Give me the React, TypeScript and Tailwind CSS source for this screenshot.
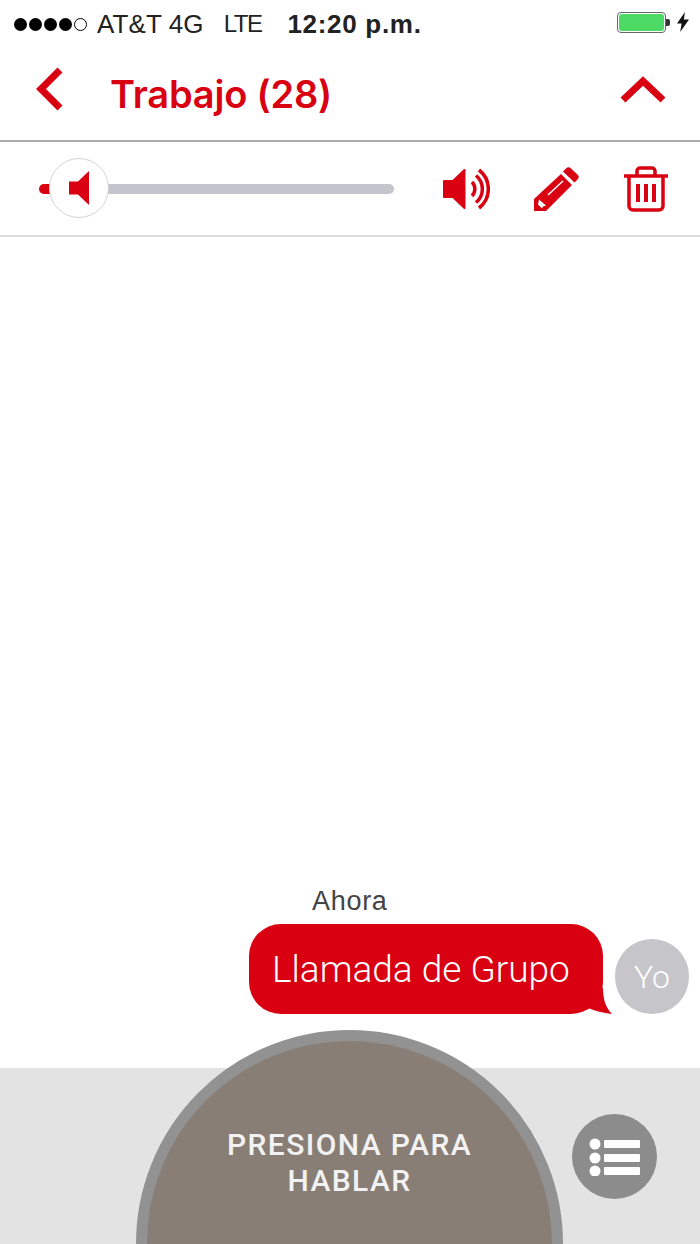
const RED = '#d90012';

function SignalDots() {
  return (
    <div className="flex items-center gap-[2px]">
      <span className="w-[13px] h-[13px] rounded-full bg-black" />
      <span className="w-[13px] h-[13px] rounded-full bg-black" />
      <span className="w-[13px] h-[13px] rounded-full bg-black" />
      <span className="w-[13px] h-[13px] rounded-full bg-black" />
      <span className="w-[13px] h-[13px] rounded-full border border-black" />
    </div>
  );
}

function StatusBar() {
  return (
    <div className="h-[48px] flex items-center pl-[14px] text-[#222] font-['Liberation_Sans',sans-serif]">
      <SignalDots />
      <span className="ml-[10px] text-[26px] leading-none whitespace-pre tracking-[0.1px]">AT&amp;T 4G</span>
      <span className="ml-[20px] text-[24px] leading-none tracking-[-1.5px]">LTE</span>
      <span className="ml-[26px] text-[26px] leading-none font-bold tracking-[0.7px]">12:20 p.m.</span>
      <div className="ml-auto mr-[11px] -mt-[4px] flex items-center">
        <div className="w-[49px] h-[21px] rounded-[4px] border border-[#666] p-[1px] bg-white">
          <div className="w-full h-full rounded-[3px] bg-[#4cd964]" />
        </div>
        <span className="w-[4px] h-[7px] rounded-r-[2px] bg-[#333]" />
        <svg className="ml-[7px]" width="12" height="20" viewBox="0 0 12 20">
          <path d="M8 0L0 11.500h4.600L3.200 20 12 7.500H6.800z" fill="#111" />
        </svg>
      </div>
    </div>
  );
}

function Header() {
  return (
    <div className="h-[94px] flex items-center border-b-2 border-[#ababab] font-['Inter',sans-serif]">
      <svg className="ml-[35px] -mt-[10px] shrink-0" width="28" height="44" viewBox="0 0 28 44">
        <path d="M25 3L6 22l19 19" fill="none" stroke={RED} strokeWidth="7" />
      </svg>
      <h1 className="ml-[47px] text-[38px] leading-none font-semibold tracking-[-0.2px] text-[#d90012]">
        Trabajo (28)
      </h1>
      <svg className="ml-auto mr-[34px] -mt-[8px] shrink-0" width="46" height="28" viewBox="0 0 46 28">
        <path d="M3 24L23 5l20 19" fill="none" stroke={RED} strokeWidth="7" />
      </svg>
    </div>
  );
}

function VolumeSlider() {
  return (
    <div className="relative ml-[39px] w-[355px] h-[10px] flex">
      <div className="w-[14px] rounded-l-full bg-[#d90012]" />
      <div className="flex-1 rounded-r-full bg-[#c4c4cc]" />
      <div className="absolute left-[10px] top-[-26px] w-[60px] h-[60px] rounded-full bg-white border border-[#d4d4d4] flex items-center justify-center">
        <svg width="20" height="34" viewBox="0 0 20 34">
          <path d="M20 0v34L9 23.500H0v-13h9z" fill={RED} />
        </svg>
      </div>
    </div>
  );
}

function Toolbar() {
  return (
    <div className="h-[95px] flex items-center border-b-2 border-[#dcdcdc]">
      <VolumeSlider />
      <svg className="ml-[49px] shrink-0" width="47" height="42" viewBox="0 0 47 42">
        <path d="M21.500 2v38L10 29H1V13h9z" fill={RED} stroke={RED} strokeWidth="2" strokeLinejoin="round" />
        <g fill="none" stroke={RED} strokeWidth="3.500">
          <path d="M29 14A10 10 0 0 1 29 28" />
          <path d="M33 7.500A17.500 17.500 0 0 1 33 34.500" />
          <path d="M36 2A24 24 0 0 1 36 40" />
        </g>
      </svg>
      <svg className="ml-[44px] shrink-0" width="46" height="46" viewBox="0 0 46 46">
        <path d="M32 2.500a3.500 3.500 0 0 1 5 0l6.500 6a3.500 3.500 0 0 1 0 5l-3 3L29 5.500z" fill={RED} />
        <path d="M27 8l11 11-26 26H0V33z" fill={RED} />
        <path d="M14 29l15-14" stroke="#fff" strokeWidth="1.500" />
        <path d="M5 33.500l7 6-3 1-1 2-4-4z" fill="#fff" />
      </svg>
      <svg className="ml-[44px] shrink-0" width="44" height="46" viewBox="0 0 44 46">
        <g fill="none" stroke={RED} strokeWidth="3.500">
          <path d="M0 10h44" />
          <path d="M13 9V5a3 3 0 0 1 3-3h12a3 3 0 0 1 3 3v4" />
          <path d="M5 11v29a4 4 0 0 0 4 4h26a4 4 0 0 0 4-4V11" />
        </g>
        <path d="M12 18h4v18h-4zM20 18h4v18h-4zM28 18h4v18h-4z" fill={RED} />
      </svg>
    </div>
  );
}

function Message() {
  return (
    <div className="pb-[54px] font-['Liberation_Sans',sans-serif]">
      <div className="pl-[312px] text-[27px] leading-[30px] text-[#444] tracking-[0.7px]">Ahora</div>
      <div className="mt-[8px] flex justify-end items-end pr-[11px] gap-[12px]">
        <div className="relative w-[354px] h-[90px] rounded-[32px] bg-[#d90012] flex items-center pl-[23px]">
          <span className="font-['Roboto',sans-serif] font-light text-[37px] leading-none text-white whitespace-nowrap">
            Llamada de Grupo
          </span>
          <svg className="absolute left-[334px] bottom-0" width="30" height="26" viewBox="0 0 30 26">
            <path d="M0 0h20c0 12 3 20 9 26-9-1-17-3-24-6H0z" fill={RED} />
          </svg>
        </div>
        <div className="w-[74px] h-[75px] rounded-full bg-[#c5c5ca] flex items-center justify-center font-['Roboto',sans-serif] font-light text-[32px] text-white">
          Yo
        </div>
      </div>
    </div>
  );
}

function BottomBar() {
  return (
    <div className="relative h-[176px] bg-[#e3e3e3] flex justify-end pt-[46px] pr-[43px] font-['Roboto',sans-serif]">
      <div className="absolute left-[136px] top-[-38px] w-[427px] h-[428px] rounded-full bg-[#887e75] border-[11px] border-[#929292] flex flex-col items-center pt-[86px] text-[30px] leading-[36px] font-medium text-[#f2f2f2] tracking-[1.4px]">
        <span>PRESIONA PARA</span>
        <span>HABLAR</span>
      </div>
      <div className="w-[85px] h-[85px] rounded-full bg-[#8c8c8c] flex items-center justify-center">
        <svg width="52" height="38" viewBox="0 0 52 38">
          <g fill="#fff">
            <circle cx="6" cy="6" r="5.500" />
            <circle cx="6" cy="20" r="5.500" />
            <circle cx="6" cy="33" r="5.500" />
            <rect x="15" y="2" width="36" height="8" rx="1" />
            <rect x="15" y="16" width="36" height="8" rx="1" />
            <rect x="15" y="29" width="36" height="8" rx="1" />
          </g>
        </svg>
      </div>
    </div>
  );
}

export default function App() {
  return (
    <div className="w-[700px] h-[1244px] flex flex-col bg-white overflow-hidden">
      <StatusBar />
      <Header />
      <Toolbar />
      <main className="flex-1 flex flex-col justify-end">
        <Message />
      </main>
      <BottomBar />
    </div>
  );
}
